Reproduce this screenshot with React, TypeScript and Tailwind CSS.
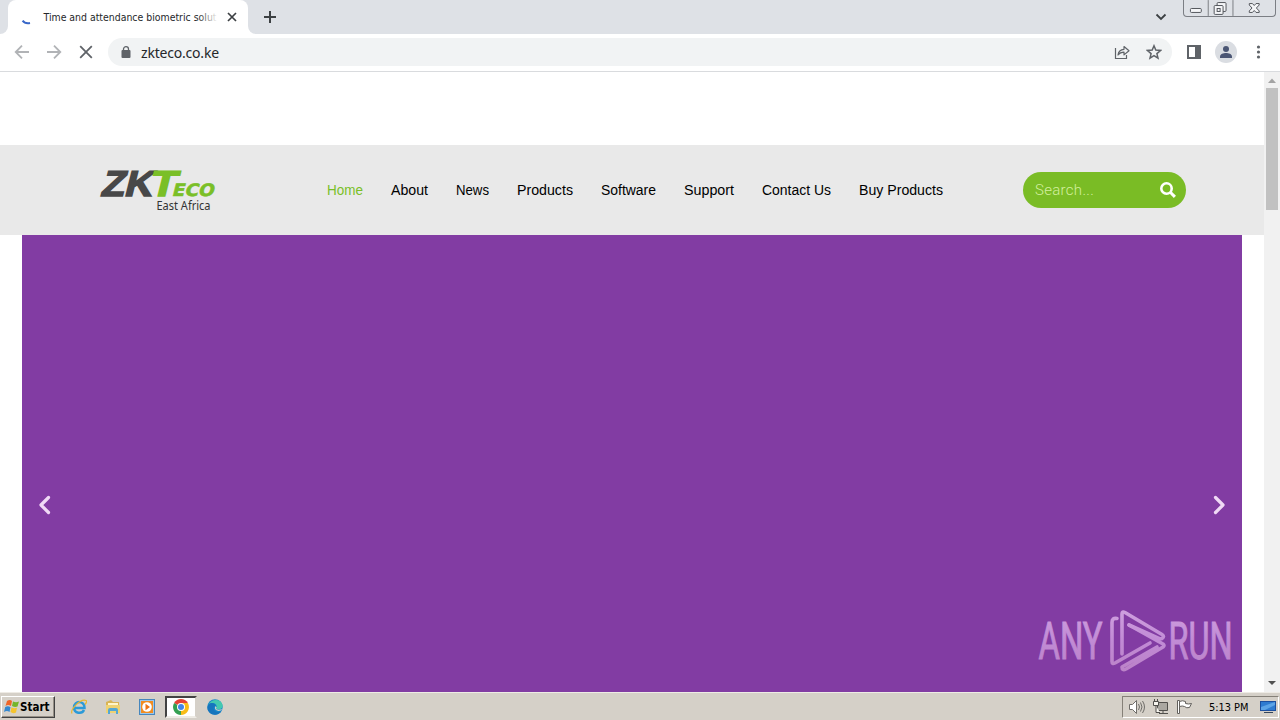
import type { ReactNode } from 'react';

// Widths keep the menu labels on whole pixels
const NAV_ITEMS = [
  { label: 'Home', width: 'w-9', active: true },
  { label: 'About', width: 'w-[37px]' },
  { label: 'News', width: 'w-[33px]' },
  { label: 'Products', width: 'w-14' },
  { label: 'Software', width: 'w-[55px]' },
  { label: 'Support', width: 'w-[50px]' },
  { label: 'Contact Us', width: 'w-[69px]' },
  { label: 'Buy Products', width: 'w-[84px]' },
];

export default function App() {
  return (
    <div className="flex flex-col w-[1280px] h-[720px] overflow-hidden bg-white font-['Liberation_Sans',sans-serif]">
      <TabStrip />
      <Toolbar />
      <div className="flex h-[620px]">
        <SitePage />
        <Scrollbar />
      </div>
      <Taskbar />
    </div>
  );
}

// --- Browser chrome ---

function TabStrip() {
  return (
    <div className="flex h-[34px] bg-[#dee1e6] shrink-0">
      {/* Rounded feet on both sides of the active tab */}
      <div className="w-2 flex items-end bg-white">
        <div className="w-2 h-[34px] bg-[#dee1e6] rounded-br-lg" />
      </div>
      <div className="flex items-center w-60 h-[34px] bg-white rounded-t-lg pl-3">
        <svg className="w-4 h-4 shrink-0" viewBox="0 0 16 16" fill="none">
          <path d="M2.6 11.6Q5 15 10 14" stroke="#3867c8" strokeWidth="2" />
        </svg>
        <div className="relative ml-[7px] w-[175px] whitespace-nowrap text-[11px] leading-4 font-['DejaVu_Sans_Condensed','DejaVu_Sans',sans-serif] font-stretch-condensed">
          <svg className="block w-[175px] h-4 overflow-visible" viewBox="0 0 175 16">
            <text x="0.5" y="12" textLength="173" lengthAdjust="spacingAndGlyphs" fill="#25272a">Time and attendance biometric solut</text>
          </svg>
          <div className="absolute right-0 top-0 w-5 h-4 bg-linear-to-r from-transparent to-white" />
        </div>
        <svg className="w-4 h-4 ml-[6px]" viewBox="0 0 16 16" fill="none" stroke="#3c4043" strokeWidth="1.7">
          <path d="M4 4l8 8M12 4l-8 8" />
        </svg>
      </div>
      <div className="w-2 bg-white">
        <div className="w-2 h-[34px] bg-[#dee1e6] rounded-bl-lg" />
      </div>
      <svg className="w-7 h-[34px]" viewBox="0 0 28 34" stroke="#3c4043" strokeWidth="2">
        <path d="M8 17h12M14 11v12" />
      </svg>
      <div className="flex-1" />
      <svg className="w-4 h-[34px] mr-[14px]" viewBox="0 0 16 34" fill="none" stroke="#3c4043" strokeWidth="1.8">
        <path d="M3.5 14.500l4.500 4.500 4.500-4.500" />
      </svg>
      <WindowButtons />
    </div>
  );
}

function WindowButtons() {
  return (
    <div className="flex h-[17px] w-[93px] mr-1 border border-t-0 border-[#7b7e84] rounded-b-[4px]">
      <svg className="w-[92px] h-4" viewBox="0 0 92 16" fill="none">
        <path d="M24.5 0v16M49.5 0v16" stroke="#7b7e84" />
        <rect x="6.5" y="8.5" width="11" height="4" rx="1" stroke="#53565c" fill="#f4f5f7" />
        <rect x="33.5" y="2.5" width="9" height="9" rx="1" stroke="#53565c" fill="#f4f5f7" />
        <rect x="30.5" y="5.5" width="9" height="9" rx="1" stroke="#53565c" fill="#f4f5f7" />
        <rect x="33.5" y="8.5" width="3" height="3" stroke="#53565c" />
        <path d="M66 3.5h3.2l1.8 2 1.8-2H76v1.500L73.200 8 76 11v1.500h-3.200l-1.800-2-1.800 2H66V11l2.800-3L66 5z" stroke="#53565c" fill="#f4f5f7" />
      </svg>
    </div>
  );
}

function Toolbar() {
  return (
    <div className="flex items-center h-[38px] shrink-0 bg-white border-b border-[#d9dbde] pl-[14px] pb-px">
      <svg className="w-4 h-4" viewBox="0 0 16 16" fill="none" stroke="#b1b3b6" strokeWidth="1.8">
        <path d="M15 8H2M8 1.700L1.700 8 8 14.300" />
      </svg>
      <svg className="w-4 h-4 ml-4" viewBox="0 0 16 16" fill="none" stroke="#b1b3b6" strokeWidth="1.8">
        <path d="M1 8h13M8 1.700L14.300 8 8 14.300" />
      </svg>
      <svg className="w-4 h-4 ml-4" viewBox="0 0 16 16" fill="none" stroke="#5f6368" strokeWidth="1.8">
        <path d="M2.200 2.200l11.600 11.600M13.800 2.200L2.200 13.800" />
      </svg>

      {/* Address bar */}
      <div className="flex items-center ml-[14px] w-[1064px] h-7 rounded-full bg-[#f1f3f4] pl-[13px] pr-[10px]">
        <svg className="w-[10px] h-3" viewBox="0 0 10 12">
          <rect x="0.5" y="4" width="9" height="8" rx="1" fill="#5f6368" />
          <path d="M2.500 5V3a2.500 2.300 0 015 0v2" fill="none" stroke="#5f6368" strokeWidth="1.3" />
        </svg>
        <span className="ml-[10px] pt-px text-[14px] leading-5 tracking-[-0.2px] text-[#25272a] font-['Noto_Sans',sans-serif]">zkteco.co.ke</span>
        <div className="flex-1" />
        <svg className="w-4 h-4" viewBox="0 0 16 16" fill="none" stroke="#5f6368" strokeWidth="1.2">
          <path d="M1.500 4v10.500h11V11" />
          <path d="M4 11C4.500 7 6.500 5.500 10 5.300V2.500l5 4.200-5 4.200V8.200C7.500 8.200 5.500 9 4 11z" strokeLinejoin="round" />
        </svg>
        <svg className="w-4 h-4 ml-4" viewBox="0 0 16 16" fill="none" stroke="#5f6368" strokeWidth="1.5">
          <path d="M8 1.800l1.800 4.300 4.700.4-3.600 3.100 1.100 4.600L8 11.700l-4 2.500 1.100-4.600-3.600-3.100 4.700-.4z" />
        </svg>
      </div>

      <svg className="w-4 h-4 ml-[14px]" viewBox="0 0 16 16">
        <path d="M1 1h14v14H1zM3 3v10h6V3z" fill="#5f6368" fillRule="evenodd" />
      </svg>
      <svg className="w-[22px] h-[22px] ml-[13px]" viewBox="0 0 22 22">
        <circle cx="11" cy="11" r="11" fill="#dadde2" />
        <circle cx="11" cy="8" r="3" fill="#4b5674" />
        <path d="M5 17v-1.500c0-2.500 3.500-3.500 6-3.500s6 1 6 3.500V17z" fill="#4b5674" />
      </svg>
      <svg className="w-4 h-4 ml-[13px]" viewBox="0 0 16 16" fill="#5f6368">
        <circle cx="8.5" cy="3" r="1.6" />
        <circle cx="8.5" cy="8" r="1.6" />
        <circle cx="8.5" cy="13" r="1.6" />
      </svg>
    </div>
  );
}

function Scrollbar() {
  return (
    <div className="flex flex-col items-center w-4 h-full bg-[#f1f1f1]">
      <svg className="w-4 h-4" viewBox="0 0 16 16">
        <path d="M4 11l4-4.500 4 4.500z" fill="#a3a3a3" />
      </svg>
      <div className="w-3 h-[122px] bg-[#c1c1c1]" />
      <div className="flex-1" />
      <svg className="w-4 h-4" viewBox="0 0 16 16">
        <path d="M4 5l4 4 4-4z" fill="#505050" />
      </svg>
    </div>
  );
}

// --- Website ---

function SitePage() {
  return (
    <div className="flex flex-col w-[1264px] h-full pt-[73px] bg-white">
      <header className="flex items-center h-[90px] shrink-0 bg-[#e9e9e9] pl-[98px]">
        <SiteLogo />
        <nav className="flex gap-7 ml-[109px] text-sm leading-5 text-black">
          {NAV_ITEMS.map((item) => (
            <a key={item.label} className={`${item.width} ${item.active ? 'text-[#7abf27]' : ''}`}>
              <svg className="block w-full h-5 overflow-visible">
                <text x="0" y="15" textLength="100%" lengthAdjust="spacingAndGlyphs" fill="currentColor">{item.label}</text>
              </svg>
            </a>
          ))}
        </nav>
        <div className="flex items-center ml-20 w-[163px] h-9 rounded-full bg-[#7abc25] pl-3 pr-[10px]">
          <span className="flex-1 text-[15px] leading-5 tracking-[0.3px] font-light text-[#d3ef9f] font-['Roboto',sans-serif]">Search...</span>
          <svg className="w-4 h-4" viewBox="0 0 16 16" fill="none" stroke="white">
            <circle cx="6.5" cy="6.5" r="5.200" strokeWidth="2.600" />
            <path d="M10.300 10.300l4.600 4.600" strokeWidth="3" />
          </svg>
        </div>
      </header>

      <section className="flex items-end justify-between h-[457px] mx-[22px] bg-[#823ca3]">
        <SlideArrow>
          <path d="M26.500 262.500l-7.500 7.500 7.500 7.500" />
        </SlideArrow>
        <div className="flex h-full">
          <div className="flex items-end pb-[19px]">
            <Watermark />
          </div>
          <SlideArrow overlap>
            <path d="M17.500 262.500L25 270l-7.500 7.500" />
          </SlideArrow>
        </div>
      </section>
    </div>
  );
}

function SlideArrow({ children, overlap }: { children: ReactNode; overlap?: boolean }) {
  return (
    <svg
      className={`w-11 h-[457px] ${overlap ? '-ml-11' : ''}`}
      viewBox="0 0 44 457"
      fill="none"
      stroke="#f0d9f5"
      strokeWidth="3.2"
      strokeLinecap="round"
      strokeLinejoin="round"
    >
      {children}
    </svg>
  );
}

function SiteLogo() {
  return (
    <svg className="w-[120px] h-[50px] overflow-visible" viewBox="0 0 120 50">
      <g transform="translate(0 31) skewX(-14)" fontWeight="bold" strokeLinejoin="miter">
        <text x="2" y="-0.5" fontSize="36" textLength="51" lengthAdjust="spacingAndGlyphs" fill="#484848" stroke="#484848" strokeWidth="1.6">ZK</text>
        <text x="50" y="-0.5" fontSize="36" textLength="27" lengthAdjust="spacingAndGlyphs" fill="#7abf27" stroke="#7abf27" strokeWidth="1.4">T</text>
        <text x="73.5" y="-0.5" fontSize="17" textLength="42" lengthAdjust="spacingAndGlyphs" fill="#7abf27" stroke="#7abf27" strokeWidth="0.6" fontFamily="DejaVu Sans, sans-serif">ECO</text>
      </g>
      <text x="58.5" y="45" fontSize="12" textLength="54" lengthAdjust="spacingAndGlyphs" fill="#333" fontFamily="Noto Sans, sans-serif">East Africa</text>
    </svg>
  );
}

function Watermark() {
  return (
    <svg className="w-[206px] h-16 overflow-visible" viewBox="0 0 206 64" fontFamily="Roboto, sans-serif">
      <defs>
        <linearGradient id="mark" x1="0" y1="0" x2="0" y2="64" gradientUnits="userSpaceOnUse">
          <stop offset="0" stopColor="#cfa0df" />
          <stop offset="0.5" stopColor="#c18bd5" />
          <stop offset="1" stopColor="#bb82c7" />
        </linearGradient>
      </defs>
      <g fill="url(#mark)" stroke="url(#mark)" strokeWidth="1" fontSize="51">
        <text x="2.5" y="50" textLength="64" lengthAdjust="spacingAndGlyphs">ANY</text>
        <text x="132.5" y="50" textLength="64" lengthAdjust="spacingAndGlyphs">RUN</text>
      </g>
      <g fill="none" stroke="url(#mark)" strokeWidth="3.6" strokeLinejoin="round" strokeLinecap="round">
        <path d="M86 45V5q0-3 3-1.500l37 22q3 2 0 4l-2 .5L93 16" />
        <path d="M81 9.500q-5-1-5 4v39q0 3 3 1.500L114 34" />
        <path d="M93 16l34 19q2 1.500 0 3L90 60q-4 2-4-2l35-20" />
      </g>
    </svg>
  );
}

// --- Windows taskbar ---

function Taskbar() {
  return (
    <div className="flex items-center h-7 shrink-0 bg-[#d5d0c8] border-t border-[#eeebe5] pl-px font-['DejaVu_Sans_Condensed','DejaVu_Sans',sans-serif]">
      <div className="flex items-center w-[54px] h-[22px] mt-px pl-[2px] border border-t-white border-l-white border-b-[#424242] border-r-[#424242] shadow-[inset_-1px_-1px_0_#969087]">
        <svg className="w-4 h-4" viewBox="0 0 16 16">
          <path d="M3 2q3-2 5 0L7 7Q4 5 1.500 7z" fill="#ef6528" />
          <path d="M9 2.500q3 1.500 6 0l-1.500 5Q11 8.500 8 7z" fill="#74b52b" />
          <path d="M1.200 8Q4 6.500 6.500 8.200L5.500 13Q3 11 0 13z" fill="#3488d0" />
          <path d="M7.500 8.200Q10 10 13 8.800L12 13.500Q9 15 6.500 13z" fill="#f5c42e" />
        </svg>
        <svg className="w-8 h-4" viewBox="0 0 32 16">
          <text x="0" y="12" fontSize="11.5" fontWeight="bold" textLength="29.5" lengthAdjust="spacingAndGlyphs">Start</text>
        </svg>
      </div>

      {/* Pinned apps */}
      <div className="flex items-center ml-4 mt-px">
        <svg className="w-4 h-4" viewBox="0 0 16 16" fill="none">
          <path d="M4 9h9.500C14 1.500 3 1 3 8.500c0 6 8 7 10 2.500" stroke="#2b9ad8" strokeWidth="2.500" />
          <path d="M1 14.500C-1 11 9-.5 15 1.500q1.500 1-1 4" stroke="#e8b730" strokeWidth="1.200" />
        </svg>
        <svg className="w-4 h-4 ml-[18px]" viewBox="0 0 16 16">
          <path d="M1 3l5-2 2 2h6v11H1z" fill="#d9b455" />
          <path d="M3 4h10v5H3z" fill="#fff5ca" />
          <path d="M1 6h14v8H1z" fill="#efd272" />
          <path d="M3 15v-4q0-2 2-2h6q2 0 2 2v4h-2v-3H5v3z" fill="#55a7d3" />
        </svg>
        <svg className="w-4 h-4 ml-[18px]" viewBox="0 0 16 16">
          <rect x="0.5" y="0.5" width="15" height="15" fill="#9bc7ec" stroke="#4686bd" />
          <rect x="2" y="2" width="12" height="12" fill="#f18c20" />
          <circle cx="8" cy="8" r="4.800" fill="white" />
          <path d="M6.500 4.800v6.400L11 8z" fill="#ed7415" />
        </svg>
        <div className="flex items-center justify-center w-8 h-[22px] ml-[10px] bg-white border-2 border-t-[#424242] border-l-[#424242] border-b-[#eeebe5] border-r-[#d5d0c8]">
          <svg className="w-4 h-4" viewBox="0 0 16 16">
            <path d="M8 8L1.100 4A8 8 0 0114.900 4z" fill="#e54335" />
            <path d="M8 8l6.900-4A8 8 0 018 16z" fill="#f8bc17" />
            <path d="M8 8v8A8 8 0 011.100 4z" fill="#34a052" />
            <path d="M8 4h6.900L11.500 10z" fill="#f8bc17" />
            <circle cx="8" cy="8" r="4" fill="white" />
            <circle cx="8" cy="8" r="3" fill="#4285e8" />
          </svg>
        </div>
        <svg className="w-4 h-4 ml-[10px]" viewBox="0 0 16 16">
          <circle cx="8" cy="8" r="7.700" fill="#1687ca" />
          <path d="M1 6C4-.5 14-1 15.600 6c.5 4-3.600 5-6.600 4 2-3-.5-6-3.500-6Q2.500 4 1 6z" fill="#43c9b0" />
          <path d="M.5 8C1 3 8 3 9 7c-4 0-3 6 2 6 2 0 3-.5 3.500-1C10 19-.5 15 .5 8z" fill="#1675bd" />
          <path d="M8.500 7q-2 4 3 5 2.500 0 4-2-4 1.500-6.500 0 1.500-1.500-.5-3z" fill="#d5d0c8" />
        </svg>
      </div>

      <div className="flex-1" />

      {/* System tray */}
      <div className="flex items-center w-[157px] h-[22px] mr-px mt-px pl-[6px] border border-t-[#858078] border-l-[#858078] border-b-white border-r-white">
        <svg className="w-4 h-4" viewBox="0 0 16 16" fill="none" stroke="#6f6d69">
          <path d="M.5 5.500h3l4-4v13l-4-4h-3z" fill="#fff" />
          <path d="M9.500 5q2 3 0 6M11.500 3.500q3 4.500 0 9M13.500 2q4 6 0 12" />
        </svg>
        <svg className="w-4 h-4 ml-2" viewBox="0 0 16 16" fill="none" stroke="#514f4c">
          <path d="M4.500 3.500h10v8h-10zM6 14.500h9M10 12v2" fill="#aaa7a1" />
          <path d="M.5 2.500h5v4h-5zM1.500 0v2M4.500 0v2M3 6.500v7h4" fill="#f7f5ef" />
        </svg>
        <svg className="w-4 h-4 ml-2" viewBox="0 0 16 16" fill="#fff" stroke="#62605c">
          <path d="M.5 1.500h2v13h-2z" />
          <path d="M2.500 2.500q3-1.500 6 0v2q3 1 6 0l-2 4q-3 1-5-1-2-1-5 0z" />
        </svg>
        <svg className="w-10 h-4 ml-[16px]" viewBox="0 0 40 16">
          <text x="0" y="12" fontSize="11" textLength="39.500" lengthAdjust="spacingAndGlyphs">5:13 PM</text>
        </svg>
        <svg className="w-4 h-4 ml-[11px]" viewBox="0 0 16 16">
          <path d="M0 2h16v10H0z" fill="#1c4f9e" />
          <path d="M1 3h14v8H1z" fill="#2e7bd0" />
          <path d="M1 8L15 3v3L5 11H1z" fill="#5ca4e6" />
          <path d="M4 13h9v1H4z" fill="#34455b" />
        </svg>
      </div>
    </div>
  );
}
